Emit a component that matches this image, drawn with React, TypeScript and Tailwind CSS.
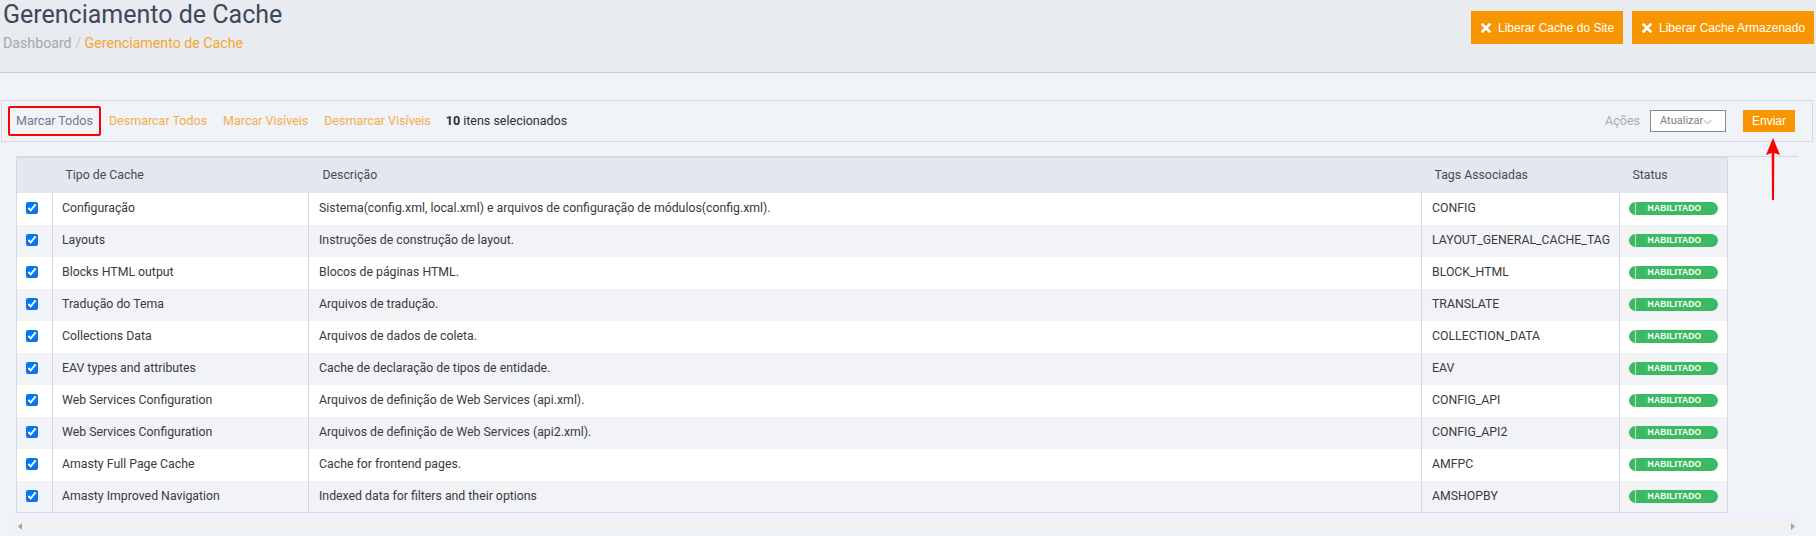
import React from "react";

const rows = [
  ["Configuração", "Sistema(config.xml, local.xml) e arquivos de configuração de módulos(config.xml).", "CONFIG"],
  ["Layouts", "Instruções de construção de layout.", "LAYOUT_GENERAL_CACHE_TAG"],
  ["Blocks HTML output", "Blocos de páginas HTML.", "BLOCK_HTML"],
  ["Tradução do Tema", "Arquivos de tradução.", "TRANSLATE"],
  ["Collections Data", "Arquivos de dados de coleta.", "COLLECTION_DATA"],
  ["EAV types and attributes", "Cache de declaração de tipos de entidade.", "EAV"],
  ["Web Services Configuration", "Arquivos de definição de Web Services (api.xml).", "CONFIG_API"],
  ["Web Services Configuration", "Arquivos de definição de Web Services (api2.xml).", "CONFIG_API2"],
  ["Amasty Full Page Cache", "Cache for frontend pages.", "AMFPC"],
  ["Amasty Improved Navigation", "Indexed data for filters and their options", "AMSHOPBY"],
];

const XIcon = () => (
  <svg width="10" height="10" viewBox="0 0 10 10" className="shrink-0">
    <path d="M1.6 1.6 L8.4 8.4 M8.4 1.6 L1.6 8.4" stroke="white" strokeWidth="2.7" strokeLinecap="square" />
  </svg>
);

export default function App() {
  return (
    <div className="relative h-[536px] w-[1816px] overflow-hidden bg-[#f0f3f8] font-['Roboto',sans-serif]">
      {/* header */}
      <div className="flex h-[73px] items-start justify-between border-b border-[#c9ccd2] bg-[#e8ebf0]">
        <div className="pl-[3px]">
          <h1 className="text-[25px] leading-[30px] text-[#3d4858]">Gerenciamento de Cache</h1>
          <div className="mt-[3px] text-[14.2px] text-[#a5a9b0]">
            Dashboard <span className="text-[#c5c8cc]">/</span>{" "}
            <span className="text-[#f5a733]">Gerenciamento de Cache</span>
          </div>
        </div>
        <div className="mt-[11px] mr-[2px] flex gap-[9px] font-['Liberation_Sans',Arial,sans-serif]">
          <button className="flex h-[33px] w-[152px] items-center gap-[7px] whitespace-nowrap bg-[#f79600] pl-[10px] text-[12px] text-white">
            <XIcon />
            Liberar Cache do Site
          </button>
          <button className="flex h-[33px] w-[182px] items-center gap-[7px] whitespace-nowrap bg-[#f79600] pl-[10px] text-[12px] text-white">
            <XIcon />
            Liberar Cache Armazenado
          </button>
        </div>
      </div>

      {/* toolbar */}
      <div className="mt-[27px] ml-[1px] mr-[3px] flex h-[42px] items-center border border-[#d6dae0] text-[12.5px]">
        <div className="ml-[6px] flex h-[30px] items-center rounded-[2px] border-2 border-[#f00] px-[6px] text-[#6a7c95]">
          Marcar Todos
        </div>
        <span className="ml-[8px] text-[#f5ad4a]">Desmarcar Todos</span>
        <span className="ml-[16px] text-[#f5ad4a]">Marcar Visíveis</span>
        <span className="ml-[16px] text-[#f5ad4a]">Desmarcar Visíveis</span>
        <span className="ml-[15px] text-[#2b2f36]">
          <b>10</b> itens selecionados
        </span>
        <div className="ml-auto flex items-center">
          <span className="text-[#a8adb6]">Ações</span>
          <div className="ml-[10px] flex h-[22px] w-[76px] items-center border border-[#8a8a8a] bg-white pl-[9px] text-[11px] text-[#7a7f87]">
            Atualizar
            <svg width="9" height="6" viewBox="0 0 9 6" className="mt-[1px]">
              <path d="M0.5 0.8 L4.5 4.8 L8.5 0.8" fill="none" stroke="#9aa0a8" strokeWidth="1" />
            </svg>
          </div>
          <button className="mr-[17px] ml-[17px] h-[22px] w-[52px] bg-[#f79600] font-['Liberation_Sans',Arial,sans-serif] text-[12px] text-white">
            Enviar
          </button>
        </div>
      </div>

      {/* table area */}
      <div className="mt-[14px] ml-[16px] w-[1782px] border-t border-[#d6dae0]">
        <table className="w-[1711px] table-fixed border-collapse border border-[#d6dae0] text-[12.3px] text-[#3a3a3a]">
          <colgroup>
            <col className="w-[36px]" />
            <col className="w-[256px]" />
            <col className="w-[1113px]" />
            <col className="w-[198px]" />
            <col className="w-[108px]" />
          </colgroup>
          <thead>
            <tr className="h-[35px] bg-[#e4e7ed] text-left text-[#454b55]">
              <th className="font-normal"></th>
              <th className="pl-[13px] font-normal">Tipo de Cache</th>
              <th className="pl-[14px] font-normal">Descrição</th>
              <th className="pl-[13px] font-normal">Tags Associadas</th>
              <th className="pl-[13px] font-normal">Status</th>
            </tr>
          </thead>
          <tbody>
            {rows.map((r, i) => (
              <tr key={i} className={i % 2 === 0 ? "h-[32px] bg-white" : "h-[32px] bg-[#f2f3f7]"}>
                <td className="pl-[9px] pt-[3px] align-middle">
                  <input type="checkbox" defaultChecked className="h-[12px] w-[12px] accent-[#0a75f2]" />
                </td>
                <td className="border-l border-[#d6dae0] pb-[1px] pl-[9px]">{r[0]}</td>
                <td className="border-l border-[#d6dae0] pb-[1px] pl-[10px]">{r[1]}</td>
                <td className="whitespace-nowrap border-l border-[#d6dae0] pb-[1px] pl-[10px]">{r[2]}</td>
                <td className="border-l border-[#d6dae0] pl-[9px]">
                  <span className="flex h-[13px] w-[89px] items-center rounded-full bg-[#3cb963]">
                    <span className="ml-[6px] h-[13px] border-l border-[#b9e6c6]"></span>
                    <span className="flex-1 pr-[5px] text-center font-['Liberation_Sans',Arial,sans-serif] text-[8.5px] font-bold tracking-[0.2px] text-white">
                      HABILITADO
                    </span>
                  </span>
                </td>
              </tr>
            ))}
          </tbody>
        </table>
      </div>

      {/* scrollbar */}
      <div className="mt-[6px] ml-[14px] flex h-[15px] w-[1785px] items-center justify-between bg-[#f1f1f1] px-[4px]">
        <svg width="5" height="7" viewBox="0 0 5 7">
          <path d="M4 0 L0 3.5 L4 7 Z" fill="#a3a3a3" />
        </svg>
        <svg width="5" height="7" viewBox="0 0 5 7">
          <path d="M1 0 L5 3.5 L1 7 Z" fill="#a3a3a3" />
        </svg>
      </div>

      {/* annotation arrow */}
      <svg className="absolute left-[1765px] top-[138px]" width="16" height="64" viewBox="0 0 16 64">
        <path d="M8 0 L15 17 L9.3 15 L9 62 L7 62 L6.7 15 L1 17 Z" fill="#f00" />
      </svg>
    </div>
  );
}
